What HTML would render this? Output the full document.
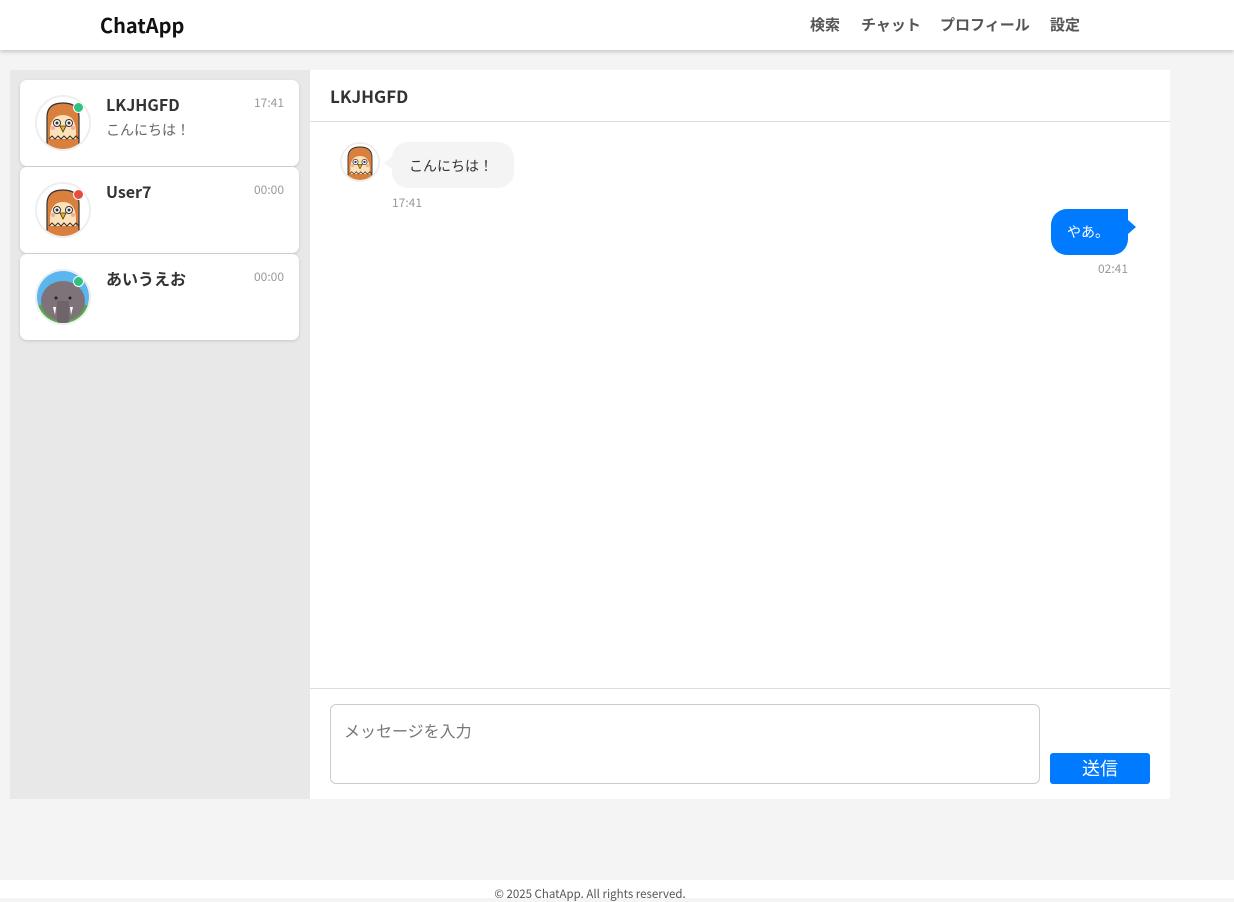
<!DOCTYPE html>
<html><head><meta charset="utf-8"><style>
*{box-sizing:border-box;margin:0;padding:0}
body{width:1234px;height:898px;background:#f4f4f4;font-family:"Liberation Sans","Noto Sans CJK JP",sans-serif;position:relative;overflow:hidden;color:#333}
.hdr{position:absolute;left:0;top:0;width:1234px;height:50px;background:#fff;box-shadow:0 2px 4px rgba(0,0,0,.18)}
.logo{position:absolute;left:100px;top:10px;font-size:20px;font-weight:bold;color:#111;font-family:"Noto Sans CJK JP",sans-serif}
.nav{position:absolute;top:14px;font-size:15px;font-weight:bold;color:#555;font-family:"Noto Sans CJK JP",sans-serif}
.side{position:absolute;left:10px;top:70px;width:300px;height:729px;background:#e8e8e8}
.card{position:absolute;left:10px;width:279px;height:86px;background:#fff;border-radius:7px;box-shadow:0 1px 3px rgba(0,0,0,.15)}
.av{position:absolute;left:15px;top:15px;width:56px;height:56px;border-radius:50%;border:2px solid #eee;overflow:hidden;background:#fff}
.dot{position:absolute;left:53px;top:22px;width:11px;height:11px;border-radius:50%;border:1px solid #fff}
.nm{position:absolute;left:86px;top:12px;font-size:16px;font-weight:bold;color:#333;font-family:"Noto Sans CJK JP",sans-serif}
.tm{position:absolute;right:15px;top:14px;font-size:12px;color:#999;font-family:"Noto Sans CJK JP",sans-serif}
.pv{position:absolute;left:86px;top:40px;font-size:14px;color:#666;font-family:"Noto Sans CJK JP",sans-serif}
.chat{position:absolute;left:310px;top:70px;width:860px;height:729px;background:#fff}
.ch{height:52px;border-bottom:1px solid #ddd;padding:13px 20px;font-size:17px;font-weight:bold;font-family:"Noto Sans CJK JP",sans-serif}
.f{font-family:"Noto Sans CJK JP",sans-serif}
</style></head><body>
<div class="hdr"><div class="logo">ChatApp</div>
<div class="nav" style="left:810px">検索</div><div class="nav" style="left:861px">チャット</div><div class="nav" style="left:940px">プロフィール</div><div class="nav" style="left:1050px">設定</div></div>

<svg width="0" height="0" style="position:absolute"><defs>
<g id="owl"><rect width="56" height="56" fill="#fff"/><path d="M12 56 L12 22 Q12 8 28 8 Q44 8 44 22 L44 56Z" fill="#d9803e" stroke="#333" stroke-width="1.2"/><path d="M15 38 Q15 20 28 20 Q41 20 41 38 L41 44 L15 44Z" fill="#fde2b8"/><circle cx="22" cy="28" r="3.5" fill="#fff" stroke="#333"/><circle cx="34" cy="28" r="3.5" fill="#fff" stroke="#333"/><circle cx="22" cy="28" r="1.5" fill="#333"/><circle cx="34" cy="28" r="1.5" fill="#333"/><circle cx="18" cy="33" r="2" fill="#f7a8a8"/><circle cx="38" cy="33" r="2" fill="#f7a8a8"/><path d="M25 31 L31 31 L28 37Z" fill="#f5b400" stroke="#333" stroke-width=".8"/><path d="M14 44 l3 -3 l3 3 l3 -3 l3 3 l3 -3 l3 3 l3 -3 l3 3 l3 -3 l3 3" fill="none" stroke="#333"/></g>
</defs></svg>

<div class="side">
<div class="card" style="top:10px"><div class="av"><svg width="52" height="52" viewBox="2 2 52 52"><use href="#owl"/></svg></div><div class="dot" style="background:#2ec27e"></div><div class="nm">LKJHGFD</div><div class="tm">17:41</div><div class="pv">こんにちは！</div></div>
<div class="card" style="top:97px"><div class="av"><svg width="52" height="52" viewBox="2 2 52 52"><use href="#owl"/></svg></div><div class="dot" style="background:#e74c3c"></div><div class="nm">User7</div><div class="tm">00:00</div></div>
<div class="card" style="top:184px"><div class="av"><svg width="52" height="52" viewBox="0 0 52 52"><rect width="52" height="52" fill="#5bb6f0"/><rect y="34" width="52" height="18" fill="#5aa84a"/><ellipse cx="26" cy="30" rx="22" ry="20" fill="#7d7378"/><rect x="20" y="30" width="12" height="22" fill="#6e6469"/><circle cx="19" cy="27" r="1.5" fill="#222"/><circle cx="33" cy="27" r="1.5" fill="#222"/><path d="M16 36 l2 8 l1-8z M36 36 l-2 8 l-1-8z" fill="#fff"/></svg></div><div class="dot" style="background:#2ec27e"></div><div class="nm">あいうえお</div><div class="tm">00:00</div></div>
</div>

<div class="chat">
<div class="ch">LKJHGFD</div>
<div style="position:absolute;left:30px;top:72px;width:40px;height:40px;border-radius:50%;border:2px solid #eee;overflow:hidden"><svg width="36" height="36" viewBox="4 4 48 48"><use href="#owl"/></svg></div>
<div style="position:absolute;left:74px;top:86px;width:0;height:0;border-top:7px solid transparent;border-bottom:7px solid transparent;border-right:9px solid #f4f4f4"></div>
<div class="f" style="position:absolute;left:82px;top:72px;width:122px;height:46px;background:#f4f4f4;border-radius:16px;padding:14px 0 0 17px;font-size:14px">こんにちは！</div>
<div class="f" style="position:absolute;left:82px;top:124px;font-size:12px;color:#999">17:41</div>
<div class="f" style="position:absolute;left:741px;top:139px;width:77px;height:46px;background:#007bff;border-radius:16px 0 16px 16px;color:#fff;padding:13px 0 0 16px;font-size:14px">やあ。</div>
<div style="position:absolute;left:818px;top:150px;width:0;height:0;border-top:7px solid transparent;border-bottom:7px solid transparent;border-left:8px solid #007bff"></div>
<div class="f" style="position:absolute;left:788px;top:190px;font-size:12px;color:#999">02:41</div>
<div style="position:absolute;left:0;top:618px;width:860px;border-top:1px solid #ddd"></div>
<div class="f" style="position:absolute;left:20px;top:634px;width:710px;height:80px;border:1px solid #ccc;border-radius:6px;padding:13px 13px;font-size:16px;color:#777">メッセージを入力</div>
<div class="f" style="position:absolute;left:740px;top:683px;width:100px;height:31px;background:#007bff;border-radius:3px;color:#fff;font-size:18px;text-align:center;line-height:31px">送信</div>
</div>
<div style="position:absolute;left:0;top:880px;width:1234px;height:18px;background:#fff"></div>
<div class="f" style="position:absolute;left:0;top:886px;width:1180px;text-align:center;font-size:11.5px;color:#555">© 2025 ChatApp. All rights reserved.</div>
</body></html>
